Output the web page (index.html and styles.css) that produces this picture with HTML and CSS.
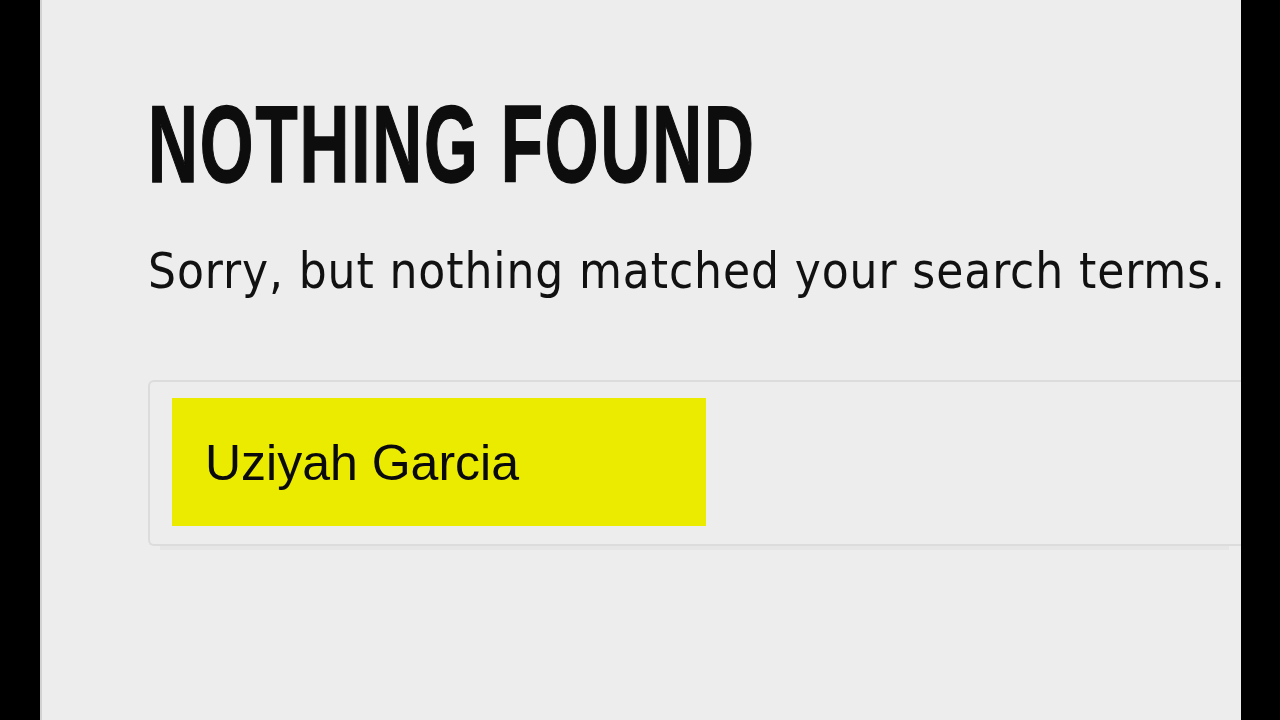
FILE: index.html
```html
<!DOCTYPE html>
<html>
<head>
<meta charset="utf-8">
<link rel="stylesheet" href="styles.css">
</head>
<body>
<div class="frame">
  <main class="page">
    <h1 class="title">NOTHING FOUND</h1>
    <p class="lead">Sorry, but nothing matched your search terms.</p>
    <div class="search-box">
      <div class="tag">Uziyah Garcia</div>
    </div>
  </main>
</div>
</body>
</html>
```
FILE: styles.css
```css
html, body {
  margin: 0;
  padding: 0;
  background: #000;
  height: 100%;
}
.frame {
  margin: 0 39px 0 40px;
  height: 720px;
  background: #ededed;
  border-left: 2px solid #d2d2d2;
  overflow: hidden;
}
.page {
  padding: 94px 0 0 106px;
}
.title {
  margin: 0;
  font-family: "Liberation Sans Narrow", "Liberation Sans", sans-serif;
  font-weight: 700;
  font-size: 110px;
  line-height: 100px;
  letter-spacing: 3px;
  color: #0d0d0d;
  -webkit-text-stroke: 1.5px #0d0d0d;
  transform: scaleX(0.628);
  transform-origin: left center;
  white-space: nowrap;
}
.lead {
  margin: 50px 0 0 0;
  font-family: "DejaVu Sans Condensed", "DejaVu Sans", sans-serif;
  font-stretch: condensed;
  font-size: 49px;
  line-height: 56px;
  letter-spacing: 0.9px;
  color: #111;
  white-space: nowrap;
}
.search-box {
  margin-top: 80px;
  border: 2px solid #dcdcdc;
  border-right: none;
  border-radius: 6px 0 0 6px;
  padding: 16px 22px;
  height: 130px;
  box-shadow: 0 16px 0 -12px #e6e6e6;
}
.tag {
  width: 534px;
  height: 128px;
  background: #ebeb00;
  box-sizing: border-box;
  padding-left: 33px;
  padding-top: 2px;
  display: flex;
  align-items: center;
  font-family: "Liberation Sans", sans-serif;
  font-size: 50px;
  color: #0a0a0a;
}
```
